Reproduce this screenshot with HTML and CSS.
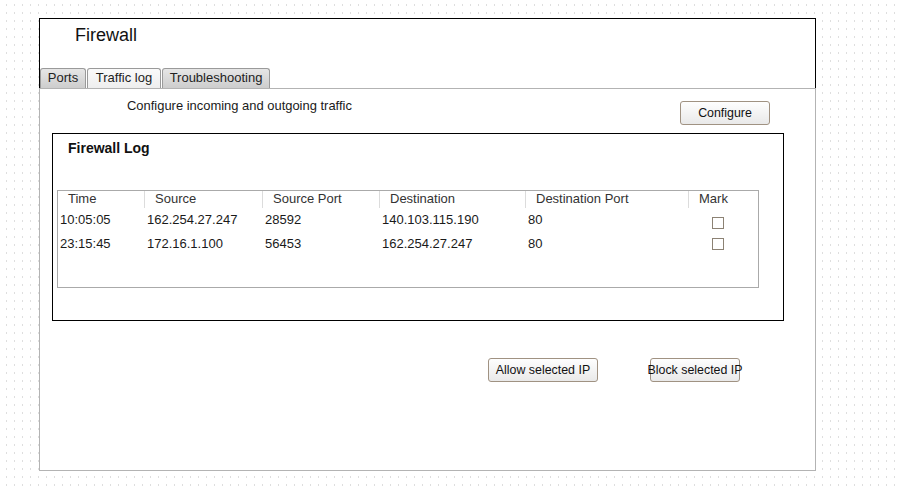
FILE: index.html
```html
<!DOCTYPE html>
<html>
<head>
<meta charset="utf-8">
<link rel="stylesheet" href="styles.css">
</head>
<body>
<div class="window">
  <div class="header">
    <div class="title">Firewall</div>
    <div class="tabs">
      <div class="tab t-ports">Ports</div>
      <div class="tab t-log active">Traffic log</div>
      <div class="tab t-trouble">Troubleshooting</div>
    </div>
  </div>
  <div class="content">
    <div class="toprow">
      <div class="desc">Configure incoming and outgoing traffic</div>
      <div class="btn btn-config">Configure</div>
    </div>
    <div class="logbox">
      <div class="logtitle">Firewall Log</div>
      <div class="table">
        <div class="row head">
          <div class="c c1">Time</div>
          <div class="c c2">Source</div>
          <div class="c c3">Source Port</div>
          <div class="c c4">Destination</div>
          <div class="c c5">Destination Port</div>
          <div class="c c6">Mark</div>
        </div>
        <div class="row data first">
          <div class="c c1">10:05:05</div>
          <div class="c c2">162.254.27.247</div>
          <div class="c c3">28592</div>
          <div class="c c4">140.103.115.190</div>
          <div class="c c5">80</div>
          <div class="c c6"><span class="check"></span></div>
        </div>
        <div class="row data">
          <div class="c c1">23:15:45</div>
          <div class="c c2">172.16.1.100</div>
          <div class="c c3">56453</div>
          <div class="c c4">162.254.27.247</div>
          <div class="c c5">80</div>
          <div class="c c6"><span class="check"></span></div>
        </div>
      </div>
    </div>
    <div class="actions">
      <div class="btn btn-allow">Allow selected IP</div>
      <div class="btn btn-block">Block selected IP</div>
    </div>
  </div>
</div>
</body>
</html>
```
FILE: styles.css
```css
html, body {
  margin: 0;
  padding: 0;
}
body {
  width: 897px;
  height: 487px;
  overflow: hidden;
  font-family: "Liberation Sans", Arial, sans-serif;
  font-size: 13px;
  color: #1a1a1a;
  background-color: #fff;
  background-image: url("data:image/svg+xml,%3Csvg xmlns='http://www.w3.org/2000/svg' width='8' height='8'%3E%3Crect x='6' y='4' width='1' height='2' fill='%23dedede'/%3E%3C/svg%3E");
  background-size: 8px 8px;
  padding: 18px 0 0 39px;
  box-sizing: border-box;
}
.window {
  width: 777px;
  background: #fff;
}
.header {
  height: 70px;
  box-sizing: border-box;
  border: 1px solid #000;
  border-bottom: none;
  display: flex;
  flex-direction: column;
  justify-content: space-between;
}
.title {
  font-size: 18px;
  line-height: 21px;
  margin: 6px 0 0 35px;
  color: #111;
}
.tabs {
  display: flex;
  gap: 1px;
  height: 20px;
}
.tab {
  box-sizing: border-box;
  height: 20px;
  border: 1px solid #9a9a9a;
  border-bottom: none;
  border-radius: 3px 3px 0 0;
  background: linear-gradient(#e6e6e6, #cdcdcd);
  text-align: center;
  line-height: 17px;
  color: #222;
}
.tab.active {
  background: linear-gradient(#fafafa, #eeeeee);
}
.t-ports { width: 46px; }
.t-log { width: 74px; }
.t-trouble { width: 108px; }
.content {
  height: 383px;
  box-sizing: border-box;
  border: 1px solid #b3b3b3;
}
.toprow {
  height: 44px;
  display: flex;
  justify-content: space-between;
  align-items: flex-start;
  padding: 9px 45px 0 87px;
  box-sizing: border-box;
}
.desc {
  line-height: 15px;
  font-size: 12.95px;
}
.btn {
  box-sizing: border-box;
  height: 24px;
  border: 1px solid #a09282;
  border-radius: 3px;
  background: linear-gradient(#fefefe, #e9e9e9);
  text-align: center;
  line-height: 22px;
  font-size: 12.4px;
  white-space: nowrap;
  color: #111;
}
.btn-config {
  width: 90px;
  margin-top: 3px;
}
.logbox {
  margin-left: 12px;
  width: 732px;
  height: 188px;
  box-sizing: border-box;
  border: 1px solid #000;
  padding: 6px 0 0 4px;
}
.logtitle {
  font-weight: bold;
  font-size: 14px;
  line-height: 16px;
  padding-left: 11px;
  color: #111;
}
.table {
  margin-top: 34px;
  width: 702px;
  height: 98px;
  box-sizing: border-box;
  border: 1px solid #aaa;
}
.row {
  display: flex;
}
.row.head {
  height: 17px;
  line-height: 15px;
}
.row.data {
  height: 24px;
  line-height: 24px;
}
.c {
  box-sizing: border-box;
  white-space: nowrap;
}
.c1 { width: 87px; }
.c2 { width: 118px; }
.c3 { width: 117px; }
.c4 { width: 146px; }
.c5 { width: 163px; }
.c6 { width: 69px; }
.head .c {
  padding-left: 10px;
  border-right: 1px solid #dcdcdc;
  color: #333;
}
.head .c6 { border-right: none; }
.data .c {
  padding-left: 2px;
}
.data .c6 {
  padding-left: 23px;
  display: flex;
  align-items: center;
}
.data.first .c6 {
  padding-top: 6px;
}
.check {
  display: block;
  width: 12px;
  height: 12px;
  box-sizing: border-box;
  border: 1px solid #8c8274;
  background: #fff;
}
.actions {
  display: flex;
  margin-top: 37px;
  padding-left: 448px;
}
.btn-allow {
  width: 110px;
}
.btn-block {
  width: 90px;
  margin-left: 52px;
  display: flex;
  justify-content: center;
  overflow: visible;
}
```
